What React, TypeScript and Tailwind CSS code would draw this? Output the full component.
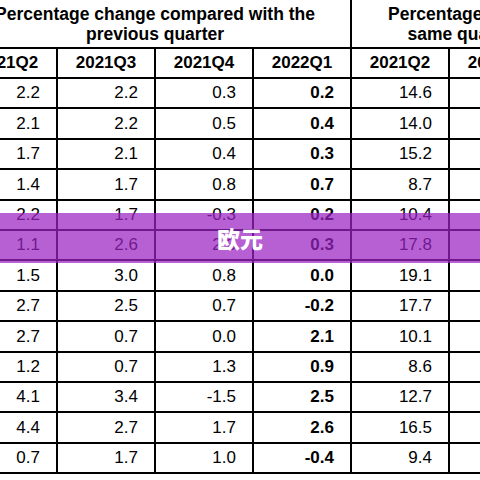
const quarters = ["2021Q2", "2021Q3", "2021Q4", "2022Q1", "2021Q2", "2021Q3", "2021Q4"];

const rows: string[][] = [
  ["2.2", "2.2", "0.3", "0.2", "14.6", "4.0", "4.7"],
  ["2.1", "2.2", "0.5", "0.4", "14.0", "3.9", "4.6"],
  ["1.7", "2.1", "0.4", "0.3", "15.2", "4.3", "4.9"],
  ["1.4", "1.7", "0.8", "0.7", "8.7", "3.3", "4.0"],
  ["2.2", "1.7", "-0.3", "0.2", "10.4", "2.9", "1.8"],
  ["1.1", "2.6", "2.3", "0.3", "17.8", "4.0", "4.8"],
  ["1.5", "3.0", "0.8", "0.0", "19.1", "5.1", "5.3"],
  ["2.7", "2.5", "0.7", "-0.2", "17.7", "4.6", "6.2"],
  ["2.7", "0.7", "0.0", "2.1", "10.1", "3.4", "3.3"],
  ["1.2", "0.7", "1.3", "0.9", "8.6", "4.6", "4.3"],
  ["4.1", "3.4", "-1.5", "2.5", "12.7", "3.0", "3.3"],
  ["4.4", "2.7", "1.7", "2.6", "16.5", "4.4", "5.0"],
  ["0.7", "1.7", "1.0", "-0.4", "9.4", "5.0", "4.8"],
];

export default function App() {
  return (
    <div className="relative w-[480px] h-[480px] overflow-hidden bg-white text-black font-['Liberation_Sans',Arial,sans-serif]">
      <div className="ml-[-40px] w-[686px] flex flex-col">
        {/* group titles */}
        <div className="flex h-[49px] border-b-2 border-black">
          <div className="w-[392px] shrink-0 border-r-2 border-black flex items-center justify-center text-center text-[17.5px] font-bold leading-[20px]">
            Percentage change compared with the
            <br />
            previous quarter
          </div>
          <div className="w-[392px] shrink-0 flex items-center justify-center text-center text-[17.5px] font-bold leading-[20px]">
            Percentage change compared with the
            <br />
            same quarter of the previous year
          </div>
        </div>

        {/* quarter labels */}
        <div className="flex h-[30px] border-b-2 border-black">
          {quarters.map((q, i) => (
            <div
              key={i}
              className="w-[98px] shrink-0 border-r-2 border-black flex items-center justify-center text-[17px] font-bold"
            >
              {q}
            </div>
          ))}
        </div>

        {rows.map((r, ri) => (
          <div key={ri} className="flex h-[30.4px] border-b-2 border-black">
            {r.map((v, ci) => (
              <div
                key={ci}
                className={
                  "w-[98px] shrink-0 border-r-2 border-black flex items-center justify-end pr-4 text-[17px] " +
                  (ci === 3 ? "font-bold" : "font-normal")
                }
              >
                {v}
              </div>
            ))}
          </div>
        ))}
      </div>

      {/* highlight band */}
      <div className="absolute left-0 right-0 top-[213px] h-[50px] bg-[rgba(155,35,195,0.72)] flex items-center justify-center">
        <span className="text-white text-[23px] font-black leading-none font-['Noto_Sans_CJK_SC',sans-serif]">
          欧元
        </span>
      </div>
    </div>
  );
}
